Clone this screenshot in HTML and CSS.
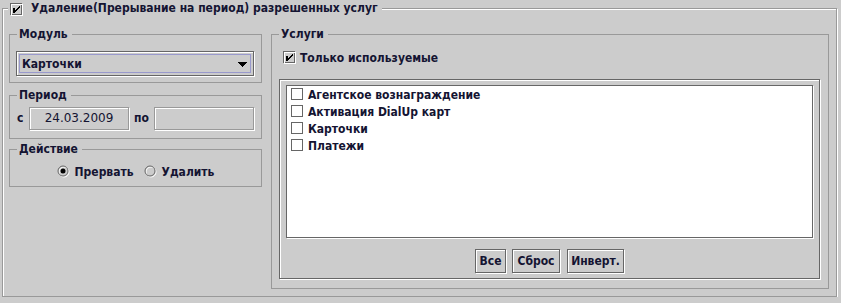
FILE: index.html
```html
<!DOCTYPE html>
<html>
<head>
<meta charset="utf-8">
<link rel="stylesheet" href="styles.css">
</head>
<body>
<fieldset class="frame">
<legend class="frame-title">
    <svg class="check" width="13" height="13" viewBox="0 0 13 13">
        <rect x="0.5" y="0.5" width="11" height="11" fill="none" stroke="#666"/>
        <rect x="1.5" y="1.5" width="11" height="11" fill="none" stroke="#fff"/>
        <path d="M3 5h2v5h-2z M9 3h1v2h-1z M8 4h1v2h-1z M7 5h1v2h-1z M6 6h1v2h-1z M5 7h1v2h-1z" fill="#000"/>
    </svg>
    <span>Удаление(Прерывание на период) разрешенных услуг</span>
</legend>

<div class="columns">
<div class="left-col">
    <fieldset class="group">
        <legend>Модуль</legend>
        <div class="module-body">
            <div class="combo">
                <div class="combo-focus">
                    <span class="combo-text">Карточки</span>
                    <svg class="combo-arrow" width="9" height="5" viewBox="0 0 9 5">
                        <path d="M0 0h9v1h-1v1h-1v1h-1v1h-1v1h-1v-1h-1v-1h-1v-1h-1v-1h-1z" fill="#000"/>
                    </svg>
                </div>
            </div>
        </div>
    </fieldset>

    <fieldset class="group group-period">
        <legend>Период</legend>
        <div class="period-body">
            <span class="field-label label-from">с</span>
            <div class="text-field">24.03.2009</div>
            <span class="field-label label-to">по</span>
            <div class="text-field"></div>
        </div>
    </fieldset>

    <fieldset class="group group-action">
        <legend>Действие</legend>
        <div class="action-body">
            <span class="radio-item">
                <svg class="radio" width="13" height="13" viewBox="0 0 13 13">
                    <circle cx="7" cy="7" r="5" fill="none" stroke="#fff"/>
                    <circle cx="6" cy="6" r="5" fill="none" stroke="#666"/>
                    <circle cx="6" cy="6" r="2.5" fill="#000"/>
                </svg>
                Прервать
            </span>
            <span class="radio-item">
                <svg class="radio" width="13" height="13" viewBox="0 0 13 13">
                    <circle cx="7" cy="7" r="5" fill="none" stroke="#fff"/>
                    <circle cx="6" cy="6" r="5" fill="none" stroke="#666"/>
                </svg>
                Удалить
            </span>
        </div>
    </fieldset>
</div>

<fieldset class="group group-services">
    <legend>Услуги</legend>
    <div class="services-body">
        <div class="check-row">
            <svg class="check" width="13" height="13" viewBox="0 0 13 13">
                <rect x="0.5" y="0.5" width="11" height="11" fill="none" stroke="#666"/>
                <rect x="1.5" y="1.5" width="11" height="11" fill="none" stroke="#fff"/>
                <path d="M3 5h2v5h-2z M9 3h1v2h-1z M8 4h1v2h-1z M7 5h1v2h-1z M6 6h1v2h-1z M5 7h1v2h-1z" fill="#000"/>
            </svg>
            <span>Только используемые</span>
        </div>

        <div class="services-panel">
            <div class="service-list">
                <div class="list-row">
                    <svg class="check" width="13" height="13" viewBox="0 0 13 13"><rect x="0.5" y="0.5" width="11" height="11" fill="none" stroke="#666"/></svg>
                    <span>Агентское вознаграждение</span>
                </div>
                <div class="list-row">
                    <svg class="check" width="13" height="13" viewBox="0 0 13 13"><rect x="0.5" y="0.5" width="11" height="11" fill="none" stroke="#666"/></svg>
                    <span>Активация DialUp карт</span>
                </div>
                <div class="list-row">
                    <svg class="check" width="13" height="13" viewBox="0 0 13 13"><rect x="0.5" y="0.5" width="11" height="11" fill="none" stroke="#666"/></svg>
                    <span>Карточки</span>
                </div>
                <div class="list-row">
                    <svg class="check" width="13" height="13" viewBox="0 0 13 13"><rect x="0.5" y="0.5" width="11" height="11" fill="none" stroke="#666"/></svg>
                    <span>Платежи</span>
                </div>
            </div>
            <div class="buttons">
                <span class="button button-all">Все</span>
                <span class="button button-reset">Сброс</span>
                <span class="button button-invert">Инверт.</span>
            </div>
        </div>
    </div>
</fieldset>
</div>
</fieldset>
</body>
</html>
```

FILE: styles.css
```css
body {
    margin: 0; background: #cccccc;
    font-family: "DejaVu Sans Condensed", "DejaVu Sans", sans-serif; font-stretch: condensed;
    font-size: 12px; font-weight: bold; color: #141432;
}
fieldset { margin: 0; padding: 0; min-width: 0; }
legend { margin-left: 7px; padding: 0 4px 0 2px; height: 15px; line-height: 15px; background: #cccccc; }
.check, .radio { display: block; flex: none; }

/* outer etched frame */
.frame {
    margin: 1px 0 0 2px; width: 835px; height: 296px; box-sizing: border-box;
    border: 1px solid #999999; box-shadow: inset 1px 1px 0 #fff, 1px 1px 0 #fff;
}
.frame-title { margin-left: 5px; padding: 0 4px 0 2px; display: flex; align-items: center; gap: 8px; }
.frame-title .check { margin-top: 1px; }

.columns { display: flex; gap: 9px; padding: 11px 7px 0 6px; }
.left-col { width: 253px; flex: none; }
.group { border: 1px solid #999999; }
.group-period { margin-top: 5px; }
.group-action { margin-top: 3px; }
.group-services { flex: 1; }

/* module combo */
.module-body { padding: 9px 7px 6px 6px; }
.combo {
    height: 25px; box-sizing: border-box; padding: 2px;
    border: 1px solid #666666; box-shadow: inset 1px 1px 0 #fff, 1px 1px 0 #fff;
}
.combo-focus {
    height: 100%; box-sizing: border-box; border: 1px solid #9999cc;
    display: flex; align-items: center; justify-content: space-between; padding: 0 2px 0 2px;
}
.combo-arrow { display: block; margin-right: 1px; margin-top: 1px; }

/* period */
.period-body { display: flex; align-items: center; padding: 4px 7px 8px 7px; }
.field-label { line-height: 23px; }
.label-from { width: 12px; }
.label-to { padding: 0 5px; }
.text-field {
    width: 100px; height: 23px; box-sizing: border-box; text-align: center; line-height: 21px;
    font-family: "DejaVu Sans", sans-serif; font-stretch: normal; font-weight: normal;
    border: 1px solid #999999; box-shadow: inset 1px 1px 0 #fff, 1px 1px 0 #fff;
}
.label-to + .text-field { margin-left: auto; }

/* action radios */
.action-body { display: flex; justify-content: center; gap: 10px; padding: 6px 0 6px 0; height: 17px; }
.radio-item { display: flex; align-items: center; gap: 5px; }

/* services */
.services-body { padding: 7px 8px 9px 7px; }
.check-row { display: flex; align-items: center; gap: 4px; height: 17px; padding-left: 4px; margin-bottom: 13px; }
.services-panel {
    height: 200px; box-sizing: border-box; padding: 5px 6px 0 6px;
    border: 1px solid #666666; box-shadow: inset 1px 1px 0 #fff, 1px 1px 0 #fff;
}
.service-list {
    height: 153px; box-sizing: border-box; background: #ffffff;
    border: 1px solid #666666; box-shadow: 1px 1px 0 #fff;
}
.list-row { display: flex; align-items: center; gap: 4px; height: 17px; padding-left: 4px; }
.buttons { display: flex; justify-content: center; margin-top: 11px; }
.button {
    display: block; height: 24px; box-sizing: border-box; line-height: 22px; text-align: center;
    border: 1px solid #666666; box-shadow: inset 1px 1px 0 #fff, 1px 1px 0 #fff;
}
.button-all { width: 31px; margin-right: 6px; }
.button-reset { width: 48px; margin-right: 7px; }
.button-invert { width: 57px; }
```
